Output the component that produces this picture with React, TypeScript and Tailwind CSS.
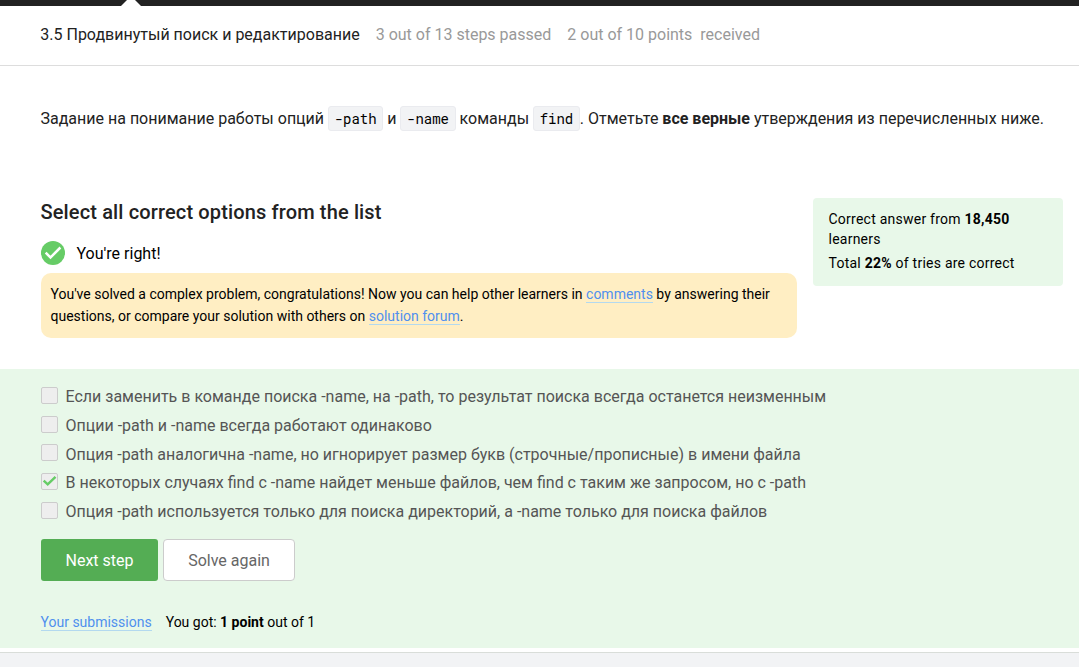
import type { ReactNode } from 'react';

const options = [
  { text: 'Если заменить в команде поиска -name, на -path, то результат поиска всегда останется неизменным', checked: false },
  { text: 'Опции -path и -name всегда работают одинаково', checked: false },
  { text: 'Опция -path аналогична -name, но игнорирует размер букв (строчные/прописные) в имени файла', checked: false },
  { text: 'В некоторых случаях find с -name найдет меньше файлов, чем find с таким же запросом, но с -path', checked: true },
  { text: 'Опция -path используется только для поиска директорий, а -name только для поиска файлов', checked: false },
];

function Code({ children }: { children: ReactNode }) {
  return (
    <code className="inline-block h-[25px] rounded-[3px] border border-[#eaebef] bg-[#f2f3f5] px-[5.6px] font-['Roboto_Mono','Noto_Sans_Mono','DejaVu_Sans_Mono',monospace] text-[14px] leading-[24px] text-black">
      {children}
    </code>
  );
}

function Link({ children }: { children: ReactNode }) {
  return (
    <a href="#" className="border-b border-[#b3d9ef] text-[#5090ee]">
      {children}
    </a>
  );
}

function Checkbox({ checked }: { checked: boolean }) {
  return (
    <span className="mt-[5px] flex size-[17px] shrink-0 items-center justify-center rounded-[2px] border border-[#ccc] bg-[#eee]">
      {checked && (
        <svg width="15" height="15" viewBox="0 0 15 15" fill="none" stroke="#66cc66" strokeWidth="2.4">
          <path d="M1.7 6.7 5.7 10.4 13.5 2.8" />
        </svg>
      )}
    </span>
  );
}

export default function App() {
  return (
    <div className="flex h-[667px] w-[1079px] flex-col overflow-hidden bg-white font-[Roboto,sans-serif] text-[16px] text-[#222]">
      <div className="h-[6px] shrink-0 bg-[#222] pl-[121px]">
        <svg width="20" height="6" viewBox="0 0 20 6" className="block">
          <path d="M0 6 6 0H14L20 6Z" fill="#fff" />
        </svg>
      </div>
      <header className="flex h-[60px] shrink-0 items-center gap-4 border-b border-[#ddd] pb-[2px] pl-[40.3px]">
        <h1>3.5 Продвинутый поиск и редактирование</h1>
        <span className="text-[#999]">3 out of 13 steps passed</span>
        <span className="whitespace-pre text-[#999]">2 out of 10 points  received</span>
      </header>

      <p className="h-[132px] shrink-0 whitespace-nowrap pl-[40.5px] pt-[40px] leading-[26px]">
        Задание на понимание работы опций <Code>-path</Code> и <Code>-name</Code> команды <Code>find</Code>. Отметьте{' '}
        <b>все верные</b> утверждения из перечисленных ниже.
      </p>

      <section className="flex h-[171px] shrink-0 items-start justify-between pl-[41px] pr-4">
        <div className="w-[756px]">
          <h2 className="-ml-[0.5px] h-[43px] text-[20px] font-medium leading-[28px] tracking-[0.14px]">Select all correct options from the list</h2>
          <div className="flex h-[24px] items-center gap-[11.5px] text-black">
            <svg width="24" height="24" viewBox="0 0 24 24">
              <circle cx="12" cy="12" r="12" fill="#66cc66" />
              <path d="M4.7 11.7 9.5 16.5 19.4 6.5" fill="none" stroke="#fff" strokeWidth="2.5" />
            </svg>
            <span className="pt-[2px]">You're right!</span>
          </div>
          <div className="mt-2 h-[65px] rounded-[10px] bg-[#ffeec3] pl-[9.5px] pr-[10px] pt-[10px] text-[14px] leading-[22px] text-black">
            You've solved a complex problem, congratulations! Now you can help other learners in <Link>comments</Link> by
            answering their questions, or compare your solution with others on <Link>solution forum</Link>.
          </div>
        </div>
        <aside className="h-[88px] w-[250px] rounded-[4px] bg-[#e8f8e9] px-[15.5px] pt-[11px] text-[14px] leading-[20px] tracking-[0.24px] text-black">
          <p>
            Correct answer from <b>18,450</b> learners
          </p>
          <p className="mt-1">
            Total <b>22%</b> of tries are correct
          </p>
        </aside>
      </section>

      <section className="h-[279px] shrink-0 bg-[#e8f8e9] pl-[41px] pt-[13px]">
        <ul className="text-[#555]">
          {options.map((option) => (
            <li key={option.text} className="flex h-[28.7px] gap-[7.5px] leading-[28.7px]">
              <Checkbox checked={option.checked} />
              <span className="pt-[1.2px]">{option.text}</span>
            </li>
          ))}
        </ul>
        <div className="mt-[13.5px] flex gap-[5px]">
          <button className="h-[42px] w-[117px] rounded-[3px] bg-[#54ad54] pt-[2px] text-white">Next step</button>
          <button className="h-[42px] w-[132px] rounded-[4px] border border-[#ccc] bg-white pt-[2px] text-[#666]">Solve again</button>
        </div>
        <div className="-ml-[0.5px] mt-[31px] flex gap-[14px] text-[14px] leading-[20px] text-black">
          <span>
            <Link>Your submissions</Link>
          </span>
          <span>
            You got: <b>1 point</b> out of 1
          </span>
        </div>
      </section>
      <footer className="mt-1 flex-1 border-t border-[#d9ddd9] bg-[#f2f3f5]" />
    </div>
  );
}
